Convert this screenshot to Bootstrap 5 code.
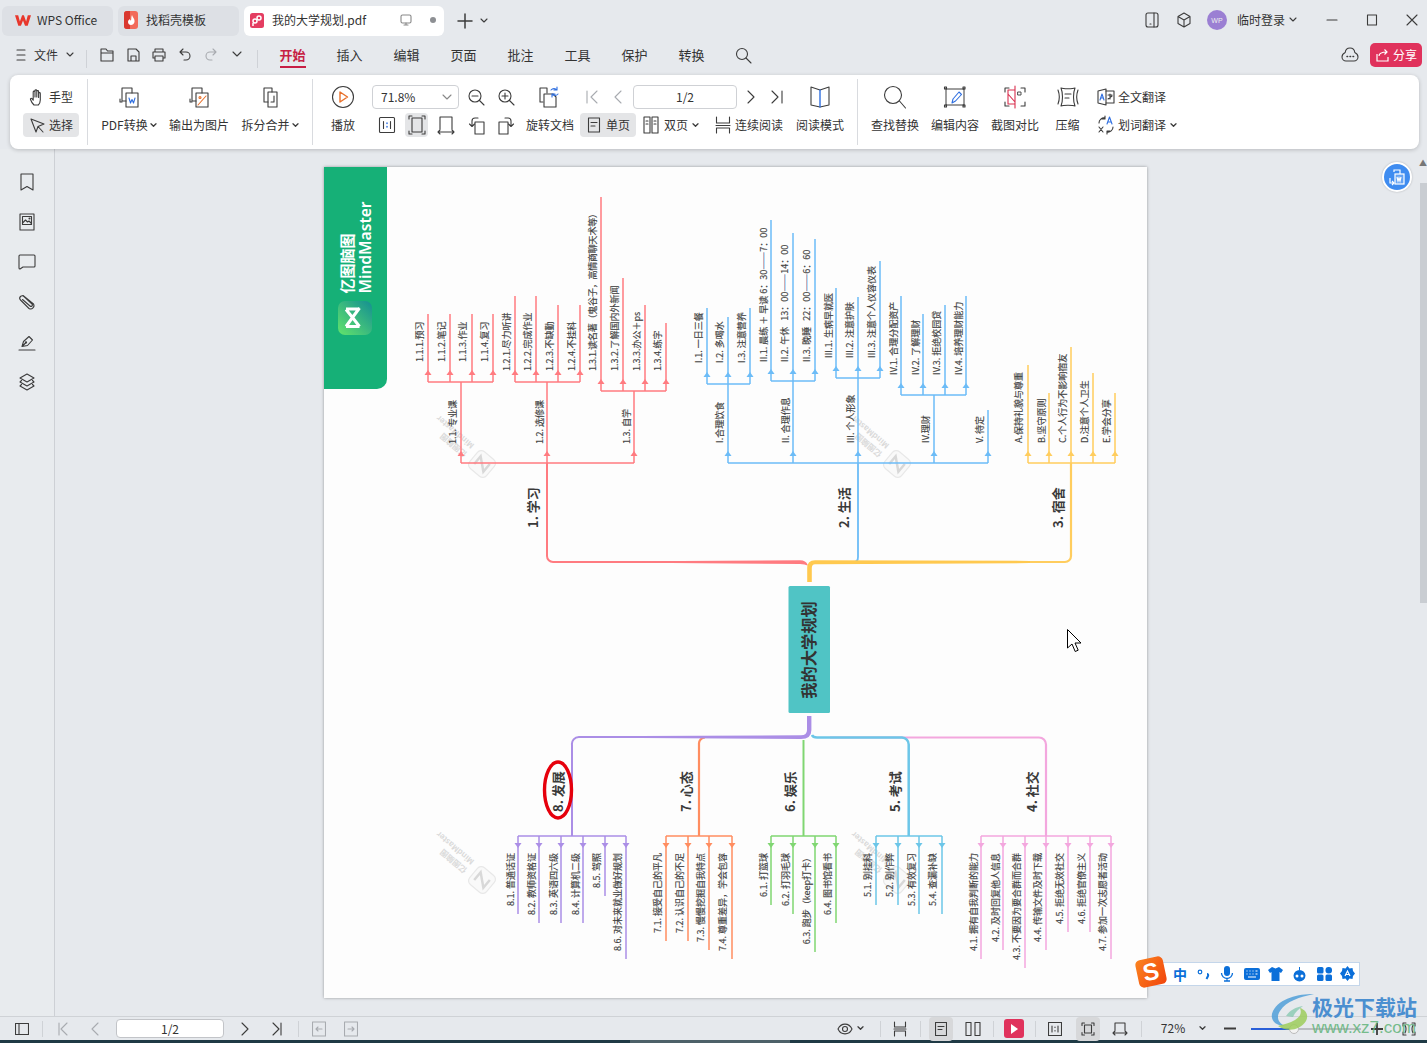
<!DOCTYPE html>
<html lang="zh">
<head>
<meta charset="utf-8">
<title>我的大学规划.pdf</title>
<link rel="stylesheet" href="https://cdn.jsdelivr.net/npm/bootstrap@5.3.0/dist/css/bootstrap.min.css">
<style>
html,body{height:1043px;overflow:hidden}
body{background:#e6e9ed;color:#333;font:12px/1.2 "Noto Sans CJK SC","Noto Sans",sans-serif;position:relative}
svg{display:block;flex:none}
.ico{fill:none;stroke:#3c3c3c;stroke-width:1.1;stroke-linecap:round;stroke-linejoin:round}
.dim{stroke:#a8abb0}
.blu{stroke:#2f6fe0}.orn{stroke:#e8702a}.rdl{stroke:#d9304f}
.cell{width:24px;height:24px;display:flex;align-items:center;justify-content:center;flex:none}
.cell-s{width:20px;height:24px;display:flex;align-items:center;justify-content:center;flex:none}
.chev{width:8px;height:24px;display:flex;align-items:center;flex:none}
.g1{margin-left:1px}.g2{margin-left:2px}.g3{margin-left:3px}.g4{margin-left:4px}.g5{margin-left:5px}.g6{margin-left:6px}.g7{margin-left:7px}.g8{margin-left:8px}.g9{margin-left:9px}.g10{margin-left:10px}.g11{margin-left:11px}.g12{margin-left:12px}.g13{margin-left:13px}.g15{margin-left:15px}.g16{margin-left:16px}.g19{margin-left:19px}.g25{margin-left:25px}
/* title row */
.titlerow{height:42px;padding:6px 0 0 2px;gap:5px}
.wtab{height:30px;background:#dde0e5;border-radius:6px;display:flex;align-items:center;flex:none;padding-bottom:2px}
.wtab-a{width:111px;padding-left:13px;gap:6px}
.wtab-b{width:121px;padding-left:6px;gap:8px}
.wtab-c{width:200px;padding-left:6px;gap:8px;background:#fff}
.tabtools{height:30px}
.rightbox{height:28px}
.avatar{width:20px;height:20px;border-radius:50%;background:#9b7fd3;color:#eee;font:7px "Liberation Sans",sans-serif}
.winbtn{width:40px;display:flex;justify-content:center}
.winlast{margin-right:-5px}
/* menu row */
.menurow{height:33px;padding:1px 5px 0 13px}
.menurow>div,.menurow>span{height:24px}
.m6{margin-top:6px}.m3{margin-top:3px}
.lh24{line-height:24px}
.vline{width:1px;background:#cfd2d7;flex:none}
.vh18{height:18px!important;align-self:center}
.mtab{width:57px;height:25px!important;text-align:center;font-size:13px;line-height:24px;flex:none}
.mtab span{display:inline-block;height:25px;border-bottom:2px solid transparent}
.mtab-on{color:#c71f45;font-weight:700}
.mtab-on span{border-bottom-color:#c71f45}
.sharebtn{width:52px;background:#e0325c;color:#fff;border-radius:5px;padding-left:6px;gap:3px;font-size:12px}
/* ribbon */
.ribbon{height:74px;margin:0 8px 0 10px;background:#fff;border-radius:8px;box-shadow:0 1px 4px rgba(0,0,0,.2);padding-top:10px;position:relative;z-index:2}
.rdiv{width:1px;height:66px;background:#d9dbdf;margin-top:-6px;flex:none}
.rowgap{gap:4px}
.rrow{height:24px;display:flex;align-items:center}
.toolcol{width:63px;flex:none}
.toolpill{width:56px;height:24px;border-radius:4px;padding-left:6px;gap:4px}
.on{background:#e4e5e7}
.bigbtn{display:flex;flex-direction:column;align-items:center;flex:none;gap:4px}
.bigbtn .cell{height:24px}
.bigbtn .lbl{height:24px;line-height:24px;white-space:nowrap;display:flex;align-items:center;gap:2px}
.midblock{margin-left:-1px;width:418px}
.zoombox{width:87px;height:24px;border:1px solid #cfd1d5;border-radius:4px;padding:0 6px 0 8px;justify-content:space-between}
.pagebox{width:104px;height:24px;border:1px solid #cfd1d5;border-radius:4px;text-align:center;line-height:22px}
.rbtn{width:23px;height:24px;border-radius:4px;flex:none}
.sglbtn{width:56px;height:24px;border-radius:4px;padding-left:2px;flex:none}
.w24{width:24px}.w48{width:48px}
.wb68{width:68px}.wb72{width:72px}.wb70{width:70px}.wb60{width:60px}.wb45{width:45px}
/* work area */
.workarea{height:867px;position:relative}
.leftrail{width:55px;border-right:1px solid #cdd0d5;background:#e8ebee;padding-top:23px;gap:20px;flex:none;align-items:center}
.sheet{width:823px;height:831px;margin:18px 0 0 269px;background:#fdfdfd;box-shadow:0 0 3px rgba(0,0,0,.35);flex:none}
.sheet text{font-family:"Noto Sans CJK SC","Liberation Sans",sans-serif;font-size:9px;fill:#3f3f3f}
.sheet .big{font-size:13px;font-weight:700;fill:#3a3a3a}
.sheet .ctr{font-size:16.3px;font-weight:700;fill:#333;text-anchor:middle}
.sheet .brand1{font-size:15px;font-weight:700;fill:#fff}
.sheet .brand2{font-size:15.6px;font-family:"Noto Sans",sans-serif;font-weight:600;fill:#fff}
.sheet .wm1{font-size:8px;fill:#dadada;font-weight:700}
.up,.dn{text-anchor:start;stroke:#444;stroke-width:.16}
.dn{text-anchor:end}
.sublines{fill:none;stroke-width:1.5}
/* overlays */
.floatbtn{position:absolute;left:1382px;top:13px;width:30px;height:30px;border-radius:50%;background:#3f8cf0;border:2px solid #fff;box-shadow:0 0 2px rgba(0,0,0,.25)}
.scrolltrack{position:absolute;left:1420px;top:34px;width:7px;height:420px;background:#c9cdd2}
.scrollup{position:absolute;left:1419px;top:9px;font-size:8px;color:#777}
.mouseptr{position:absolute;left:1067px;top:480px}
/* status */
.statusbar{height:24px;background:#e6e9ed;border-top:1px solid #cfd2d6;padding-left:12px;padding-right:8px;position:relative}
.sdiv{width:1px;height:16px;background:#cfd2d6;flex:none}
.sinput{width:108px;height:19px;background:#fff;border:1px solid #c2c4c8;border-radius:4px;text-align:center;line-height:17px;flex:none}
.sbtn{width:24px;height:24px;border-radius:4px;flex:none;background:#d7d8da}
.redplay{width:20px;height:19px;border-radius:3px;background:#e0325c;flex:none}
.pct{width:30px;text-align:center;flex:none;font-size:12px}
.slide{width:110px;height:2px;background:#b9bcc1;flex:none}
.slide i{display:block;width:39px;height:2px;background:#2a5fd8}
.slide b{display:block;width:10px;height:10px;border-radius:50%;background:#f3f3f3;border:1px solid #bbb;margin-left:-1px}
.taskstrip{height:3px;background:linear-gradient(90deg,#1f3a45 630px,#4d6168 630px,#4d6168 790px,#1f3a45 790px)}
/* IME */
.imebar{position:absolute;left:1147px;top:962px;width:213px;height:24px;background:#fff;border:1px solid #c4d6ea;color:#0b6fd9;padding-left:24px;z-index:5}
.imebar .hz{font-weight:700;font-size:14px;line-height:22px;width:14px}
.imelogo{position:absolute;left:1137px;top:958px;width:28px;height:28px;background:linear-gradient(135deg,#fb8420,#f1450c);border-radius:5px;transform:rotate(-12deg);color:#fff;font:900 24px/27px "Liberation Sans",sans-serif;text-align:center;z-index:6}
.fillb{fill:#0b6fd9;stroke:none}
/* watermark */
.wmk{position:absolute;left:1268px;top:992px;width:155px;height:46px;z-index:7;pointer-events:none}
.wmk-t{position:absolute;left:44px;top:3px;font-size:21px;line-height:23px;font-weight:700;color:#4b8fd0;white-space:nowrap}
.wmk-u{position:absolute;left:44px;top:27px;font:17px/18px "Liberation Sans",sans-serif;color:#62b47a;white-space:nowrap;opacity:.85}
</style>
</head>
<body>

<div class="titlerow d-flex align-items-start">
  <div class="wtab wtab-a">
    <svg width="16" height="13" viewBox="0 0 18 14"><path d="M0 1h3.6l1.900 7L8 1h2l2.500 7 1.900-7H18l-3.700 12h-3L9 7l-2.300 6h-3z" fill="#e8372c"/></svg>
    <span>WPS Office</span>
  </div>
  <div class="wtab wtab-b">
    <svg width="14" height="18" viewBox="0 0 14 18"><rect width="14" height="18" rx="3" fill="#f26a5a"/><path d="M0 3a3 3 0 0 1 3-3h3v18H3a3 3 0 0 1-3-3z" fill="#d9382f"/><path d="M8 4c1 3 3 4 2.500 7-.4 2-2 3-3.500 3S4 13 4 11c0-1.500 1-2 1.500-3 .5 1 1 1.500 1.500 1.500C7.500 8 7 6 8 4z" fill="#fff"/></svg>
    <span>找稻壳模板</span>
  </div>
  <div class="wtab wtab-c">
    <svg width="14" height="15" viewBox="0 0 14 15"><rect width="14" height="15" rx="2.500" fill="#e43d61"/><circle cx="5" cy="8" r="2" fill="none" stroke="#fff" stroke-width="1.500"/><circle cx="9" cy="5" r="2" fill="none" stroke="#fff" stroke-width="1.500"/><path d="M3 10v3" stroke="#fff" stroke-width="1.500"/></svg>
    <span>我的大学规划.pdf</span>
    <svg class="ico g25" width="14" height="14" viewBox="0 0 14 14"><rect x="2" y="2" width="10" height="8" rx="1.500" stroke="#888"/><path d="M7 10v2M5 12h4" stroke="#888"/></svg>
    <svg class="g8" width="8" height="8" viewBox="0 0 8 8"><circle cx="4" cy="4" r="3" fill="#8d8f93"/></svg>
  </div>
  <div class="tabtools d-flex align-items-center g8">
    <svg class="ico" width="16" height="16" viewBox="0 0 16 16"><path d="M8 1v14M1 8h14" stroke-width="1.500"/></svg>
    <svg class="ico g7" width="8" height="6" viewBox="0 0 8 6"><path d="M1 1l3 3 3-3"/></svg>
  </div>
  <div class="rightbox ms-auto d-flex align-items-center">
    <svg class="ico" width="16" height="18" viewBox="0 0 16 18"><rect x="2" y="2" width="12" height="14" rx="2"/><path d="M10 2v14M6 13h1"/></svg>
    <svg class="ico g16" width="16" height="18" viewBox="0 0 16 18"><path d="M8 2l6 3.500v7L8 16l-6-3.500v-7zM2 5.500L8 9l6-3.500M8 9v7"/></svg>
    <div class="avatar g15 d-flex align-items-center justify-content-center">WP</div>
    <span class="g10">临时登录</span>
    <svg class="ico g4" width="8" height="6" viewBox="0 0 8 6"><path d="M1 1l3 3 3-3"/></svg>
    <div class="winbtn g15"><svg class="ico" width="12" height="12" viewBox="0 0 12 12"><path d="M1 6h10"/></svg></div>
    <div class="winbtn"><svg class="ico" width="12" height="12" viewBox="0 0 12 12"><rect x="1.500" y="1" width="9" height="10"/></svg></div>
    <div class="winbtn winlast"><svg class="ico" width="12" height="12" viewBox="0 0 12 12"><path d="M1 1l10 10M11 1L1 11"/></svg></div>
  </div>
</div>

<div class="menurow d-flex align-items-start">
  <svg class="ico m6" width="16" height="12" viewBox="0 0 16 12"><path d="M4 1h8M4 6h8M4 11h8"/></svg>
  <span class="g5 lh24">文件</span>
  <div class="chev g8"><svg class="ico" width="8" height="6" viewBox="0 0 8 6"><path d="M1 1l3 3 3-3"/></svg></div>
  <div class="vline vh18 g12"></div>
  <div class="cell-s g10"><svg class="ico" width="16" height="16" viewBox="0 0 16 16"><path d="M2 2h5l1.500 2H14v10H2zM2 6h12"/></svg></div>
  <div class="cell-s g6"><svg class="ico" width="16" height="16" viewBox="0 0 16 16"><path d="M3 2h8l3 3v9H3zM6 14V9h5v5"/></svg></div>
  <div class="cell-s g6"><svg class="ico" width="16" height="16" viewBox="0 0 16 16"><path d="M4 5V2h8v3M4 11H2V5h12v6h-2M4 9h8v5H4z"/></svg></div>
  <div class="cell-s g6"><svg class="ico" width="16" height="16" viewBox="0 0 16 16"><path d="M6 2L3 5l3 3M3 5h6a4 4 0 0 1 0 8H7"/></svg></div>
  <div class="cell-s g6"><svg class="ico dim" width="16" height="16" viewBox="0 0 16 16"><path d="M10 2l3 3-3 3M13 5H7a4 4 0 0 0 0 8h2"/></svg></div>
  <div class="cell-s g6"><svg class="ico" width="10" height="8" viewBox="0 0 10 8"><path d="M1 1l4 4 4-4"/></svg></div>
  <div class="vline vh18 g10"></div>
  <div class="mtab g6 mtab-on"><span>开始</span></div>
  <div class="mtab"><span>插入</span></div>
  <div class="mtab"><span>编辑</span></div>
  <div class="mtab"><span>页面</span></div>
  <div class="mtab"><span>批注</span></div>
  <div class="mtab"><span>工具</span></div>
  <div class="mtab"><span>保护</span></div>
  <div class="mtab"><span>转换</span></div>
  <div class="cell-s g13"><svg class="ico" width="17" height="17" viewBox="0 0 17 17"><circle cx="7" cy="7" r="5.500"/><path d="M11 11l5 5"/></svg></div>
  <svg class="ico ms-auto m3" width="18" height="18" viewBox="0 0 18 18"><path d="M9 2c3 0 4.500 2 4.800 4.500C16 7.500 17 9 17 11c0 2.500-2 4-4 4H5c-2 0-4-1.500-4-4 0-2 1-3.500 3.200-4.500C4.500 4 6 2 9 2z"/><path d="M6 10.500h.6M9 10.500h.6M12 10.500h.6" stroke-width="1.500"/></svg>
  <div class="sharebtn g11 d-flex align-items-center">
    <svg width="14" height="14" viewBox="0 0 14 14" fill="none" stroke="#fff" stroke-width="1.200"><path d="M1 6v7h11V9M3 8c0-3 3-4 8-4M8.500 1.500L11 4 8.500 6.500"/></svg>
    <span>分享</span>
  </div>
</div>

<div class="ribbon d-flex">
  <!-- hand / select -->
  <div class="toolcol d-flex flex-column rowgap g13">
    <div class="toolpill d-flex align-items-center">
      <svg class="ico" width="16" height="18" viewBox="0 0 16 18"><path d="M5 17c-1.500-1.500-3-4-3.500-5.500-.4-1 .8-1.600 1.500-.8l1.200 1.500V4c0-1.200 1.800-1.200 1.800 0v5V2.800c0-1.200 1.800-1.200 1.800 0V9V3.500c0-1.200 1.800-1.200 1.800 0v6V5.500c0-1.200 1.700-1.200 1.700 0V12c0 2.500-1 4-2 5z"/></svg><span>手型</span>
    </div>
    <div class="toolpill on d-flex align-items-center">
      <svg class="ico" width="16" height="18" viewBox="0 0 16 18"><path d="M2 3l5 13 2-5.500L15 8zM9 10.500L14 16"/></svg><span>选择</span>
    </div>
  </div>
  <div class="rdiv g1"></div>
  <!-- convert -->
  <div class="d-flex g7">
    <div class="bigbtn wb68"><div class="cell"><svg class="ico" width="24" height="24" viewBox="0 0 24 24"><path d="M15 8V3H5v13h4M3 14v3h2"/><rect x="9" y="8" width="12" height="14"/><path class="blu" d="M12 13l1.500 5 1.500-3.500 1.500 3.500 1.500-5"/></svg></div><div class="lbl">PDF转换<svg class="ico" width="7" height="5" viewBox="0 0 8 6"><path d="M1 1l3 3 3-3" stroke-width="1.600"/></svg></div></div>
    <div class="bigbtn wb72"><div class="cell"><svg class="ico" width="24" height="24" viewBox="0 0 24 24"><path d="M15 8V3H5v13h4M3 14v3h2"/><rect x="9" y="8" width="12" height="14"/><path class="orn" d="M11 20l8-9"/><circle class="orn" cx="13" cy="12.500" r="1"/></svg></div><div class="lbl">输出为图片</div></div>
    <div class="bigbtn wb70"><div class="cell"><svg class="ico" width="24" height="24" viewBox="0 0 24 24"><path d="M14 7V3H6v14h4"/><path d="M10 7h9v15h-9z"/><path d="M16 11v6h-3"/></svg></div><div class="lbl">拆分合并<svg class="ico" width="7" height="5" viewBox="0 0 8 6"><path d="M1 1l3 3 3-3" stroke-width="1.600"/></svg></div></div>
  </div>
  <div class="rdiv g7"></div>
  <div class="bigbtn wb60"><div class="cell"><svg class="ico" width="24" height="24" viewBox="0 0 24 24"><circle cx="12" cy="12" r="10.500"/><path class="orn" d="M9 7l7.500 5L9 17z" stroke-width="1.400"/></svg></div><div class="lbl">播放</div></div>
  <!-- middle -->
  <div class="midblock d-flex flex-column rowgap">
    <div class="rrow">
      <div class="zoombox d-flex align-items-center"><span>71.8%</span><svg class="ico" width="10" height="6" viewBox="0 0 10 6"><path d="M1 1l4 4 4-4" stroke="#888"/></svg></div>
      <div class="cell g5"><svg class="ico" width="18" height="18" viewBox="0 0 18 18"><circle cx="8" cy="8" r="6"/><path d="M12.500 12.500L17 17M5 8h6"/></svg></div>
      <div class="cell g6"><svg class="ico" width="18" height="18" viewBox="0 0 18 18"><circle cx="8" cy="8" r="6"/><path d="M12.500 12.500L17 17M5 8h6M8 5v6"/></svg></div>
      <div class="cell g19"><svg class="ico" width="22" height="24" viewBox="0 0 22 24"><path d="M9 8V3H2v14h3"/><path d="M6 9h9l3 3v10H6z"/><path class="blu" d="M13 5a4 4 0 0 1 6 0M19 2v3h-3M20 9a4 4 0 0 1-6 0M14 12V9h3"/></svg></div>
      <div class="cell g19"><svg class="ico dim" width="14" height="16" viewBox="0 0 14 16"><path d="M2 2v12M12 2L6 8l6 6"/></svg></div>
      <div class="cell g2"><svg class="ico dim" width="10" height="16" viewBox="0 0 10 16"><path d="M8 2L2 8l6 6"/></svg></div>
      <div class="pagebox g3">1/2</div>
      <div class="cell g2"><svg class="ico" width="10" height="16" viewBox="0 0 10 16"><path d="M2 2l6 6-6 6"/></svg></div>
      <div class="cell g2"><svg class="ico" width="14" height="16" viewBox="0 0 14 16"><path d="M2 2l6 6-6 6M12 2v12"/></svg></div>
    </div>
    <div class="rrow">
      <div class="cell g3"><svg class="ico" width="18" height="18" viewBox="0 0 18 18"><rect x="1.500" y="1.500" width="15" height="15" rx="1"/><path d="M5.500 5.500v7M12.500 5.500v7"/><path class="blu" d="M9 7v.5M9 10.500v.5" stroke-width="1.500"/></svg></div>
      <div class="rbtn on g6 d-flex align-items-center justify-content-center"><svg class="ico" width="18" height="20" viewBox="0 0 18 20"><path d="M1 4V1h3M14 1h3v3M17 16v3h-3M4 19H1v-3"/><rect x="4" y="3" width="10" height="14"/></svg></div>
      <div class="cell g6"><svg class="ico" width="18" height="20" viewBox="0 0 18 20"><path d="M3 14V2h12v12M1 17h16M3 15l-2 2 2 2M15 15l2 2-2 2"/></svg></div>
      <div class="cell g7"><svg class="ico" width="18" height="20" viewBox="0 0 18 20"><rect x="7" y="7" width="9" height="12"/><path d="M4 11V6a3 3 0 0 1 3-3h3M1.500 9L4 11.500 6.500 9"/></svg></div>
      <div class="cell g5"><svg class="ico" width="18" height="20" viewBox="0 0 18 20"><rect x="2" y="7" width="9" height="12"/><path d="M14 11V6a3 3 0 0 0-3-3H8M11.500 9l2.500 2.500L16.500 9"/></svg></div>
      <span class="w48 g8 flex-none">旋转文档</span>
      <div class="sglbtn on g6 d-flex align-items-center"><div class="cell"><svg class="ico" width="14" height="16" viewBox="0 0 14 16"><rect x="1.500" y="1" width="11" height="14"/><path d="M4 5.500h6M4 9h4"/></svg></div><span>单页</span></div>
      <div class="cell g3"><svg class="ico" width="16" height="18" viewBox="0 0 16 18"><rect x="1" y="1" width="6" height="16"/><rect x="9" y="1" width="6" height="16"/><path d="M3 5h2M3 8h2M11 5h2M11 8h2"/></svg></div>
      <span class="g1 w24 flex-none">双页</span>
      <div class="chev g4"><svg class="ico" width="7" height="5" viewBox="0 0 8 6"><path d="M1 1l3 3 3-3" stroke-width="1.600"/></svg></div>
      <div class="cell g11"><svg class="ico" width="16" height="18" viewBox="0 0 16 18"><path d="M1.500 1v6h13V1M1 9.500h14M1.500 17v-5h13v5"/></svg></div>
      <span class="w48 flex-none">连续阅读</span>
    </div>
  </div>
  <div class="bigbtn wb60"><div class="cell"><svg class="ico" width="22" height="24" viewBox="0 0 22 24"><path d="M2 2l9 3 9-3v18l-9 2-9-2z"/><path class="blu" d="M11 5v17" stroke-width="1.400"/></svg></div><div class="lbl">阅读模式</div></div>
  <div class="rdiv g7"></div>
  <div class="bigbtn wb60 g7"><div class="cell"><svg class="ico" width="24" height="24" viewBox="0 0 24 24"><circle cx="10" cy="10" r="8.500"/><path d="M16.500 16l6 7"/></svg></div><div class="lbl">查找替换</div></div>
  <div class="bigbtn wb60"><div class="cell"><svg class="ico" width="24" height="24" viewBox="0 0 24 24"><path d="M3 5v15h18V4H3M3 3v1M21 3v1M3 20v1M21 20v1" stroke-width="1"/><rect x="1.500" y="2" width="2" height="2"/><rect x="20" y="2" width="2" height="2"/><rect x="1.500" y="20" width="2" height="2"/><rect x="20" y="20" width="2" height="2"/><path class="blu" d="M9 18l1-4 6-7 2.500 2.500-6 6.500z"/></svg></div><div class="lbl">编辑内容</div></div>
  <div class="bigbtn wb60"><div class="cell"><svg class="ico" width="24" height="24" viewBox="0 0 24 24"><path d="M2 7V3h4M18 3h4v4M22 17v4h-4M6 21H2v-4"/><path class="rdl" d="M12 1v22M5 5h7v14H5zM5 9l7 8"/><rect x="15" y="7" width="3" height="3" stroke-width=".9"/></svg></div><div class="lbl">截图对比</div></div>
  <div class="bigbtn wb45"><div class="cell"><svg class="ico" width="24" height="24" viewBox="0 0 24 24"><path d="M5 3c2 1 12 1 14 0-2 5-2 13 0 18-2-1-12-1-14 0 2-5 2-13 0-18z"/><path d="M2 5c1.500 4 1.500 10 0 14M22 5c-1.500 4-1.500 10 0 14M9 9h6M9 13h4"/></svg></div><div class="lbl">压缩</div></div>
  <div class="d-flex flex-column rowgap g4">
    <div class="rrow"><div class="cell"><svg class="ico" width="18" height="18" viewBox="0 0 18 18"><path d="M1 3l8-2v16l-8-2z"/><path d="M9 3h8v12H9"/><path class="blu" d="M3 12l2-6 2 6M3.800 10h2.400"/><path d="M11 7h4M13 6v5M11 11l4-3"/></svg></div><span>全文翻译</span></div>
    <div class="rrow"><div class="cell"><svg class="ico" width="18" height="20" viewBox="0 0 18 20"><path d="M2 8a5 5 0 0 1 6-5M8 1v3H5M16 12a5 5 0 0 1-6 5M10 19v-3h3"/><path class="blu" d="M10 9l2.500-7L15 9M11 7h3"/><path d="M2 12l4 5M6 12l-4 5"/></svg></div><span>划词翻译</span><div class="chev g4"><svg class="ico" width="7" height="5" viewBox="0 0 8 6"><path d="M1 1l3 3 3-3" stroke-width="1.600"/></svg></div></div>
  </div>
</div>

<div class="workarea d-flex">
  <div class="leftrail d-flex flex-column">
    <svg class="ico" width="20" height="20" viewBox="0 0 20 20"><path d="M4 2h12v16l-6-3.500L4 18z"/></svg>
    <svg class="ico" width="20" height="20" viewBox="0 0 20 20"><rect x="3" y="2" width="14" height="16"/><rect x="5.500" y="4.500" width="9" height="8"/><path d="M5.500 11l3-3 2 2 1.500-1 2.500 2.500"/><circle cx="12.500" cy="6.500" r=".5"/></svg>
    <svg class="ico" width="20" height="20" viewBox="0 0 20 20"><path d="M3 3h14a1 1 0 0 1 1 1v10a1 1 0 0 1-1 1H6l-3 2a1 1 0 0 1-1-1V4a1 1 0 0 1 1-1z"/></svg>
    <svg class="ico" width="20" height="20" viewBox="0 0 20 20"><path d="M6 3.500l10.500 8.500a3.300 3.300 0 0 1-4.500 4.500L3.500 8a2.400 2.400 0 0 1 3.500-3.500l8 7.500a1.400 1.400 0 0 1-2 2L5.500 7.500"/></svg>
    <svg class="ico" width="20" height="20" viewBox="0 0 20 20"><path d="M2 18h16M5 14.500l1.500-5L12 4.500l3.500 3.500-5 5.500zM5 14.500l3.500-3.500"/><circle cx="9" cy="10.500" r=".6"/></svg>
    <svg class="ico" width="20" height="20" viewBox="0 0 20 20"><path d="M10 2l7 4-7 4-7-4zM4.500 8.500L3 10l7 4 7-4-1.500-1.500M4.500 12.500L3 14l7 4 7-4-1.500-1.500"/></svg>
  </div>

  <div class="sheet">
    <svg width="823" height="831" viewBox="324 167 823 831">
      <defs>
        <path id="au" d="M-3.500 0L0-5 3.500 0z"/>
        <path id="ad" d="M-3.500 0L0 5 3.500 0z"/>
        <g id="wm">
          <rect x="-11" y="-11" width="22" height="22" rx="5" fill="#f9f9f9" stroke="#e8e8e8" stroke-width="1.200"/>
          <path d="M-6 5V-5L6 5V-5" fill="none" stroke="#d8d8d8" stroke-width="2.500"/>
          <text class="wm1" x="18" y="-1">亿图脑图</text>
          <text class="wm1" x="18" y="10">MindMaster</text>
        </g>
        <linearGradient id="lg" x1="0" y1="1" x2="1" y2="0"><stop offset="0" stop-color="#62e46b"/><stop offset="1" stop-color="#148f92"/></linearGradient>
      </defs>

      <!-- banner -->
      <path d="M324 167h63v212a10 10 0 0 1-10 10h-53z" fill="#16b077"/>
      <rect x="338" y="301" width="34" height="34" rx="7" fill="url(#lg)"/>
      <path d="M346 309.500l6.500 8-6.500 9M359.500 308l-7 9.500 7 9M346 309h13.500M346 326.500h13.500" fill="none" stroke="#fff" stroke-width="3" stroke-linejoin="round"/>
      <text class="brand1" transform="translate(352.500 293.500) rotate(-90)">亿图脑图</text>
      <text class="brand2" transform="translate(370.500 293.500) rotate(-90)">MindMaster</text>

      <!-- watermarks -->
      <use href="#wm" transform="translate(482 464) rotate(220)"/>
      <use href="#wm" transform="translate(897 464) rotate(220)"/>
      <use href="#wm" transform="translate(482 880) rotate(220)"/>
      <use href="#wm" transform="translate(897 880) rotate(220)"/>

      <!-- trunk -->
      <path d="M547 463V556a6 6 0 0 0 6 6H700" fill="none" stroke="#ff7b80" stroke-width="2"/>
      <path d="M640 561.200L800 560.200Q806 560.400 807.500 564.500L807.500 565.500Q805 564 800 564L640 562.800z" fill="#ff7b80"/>
      <path d="M858 463V557q0 5-4 5" fill="none" stroke="#6cbcf7" stroke-width="1.800"/>
      <path d="M1071 463V556a6 6 0 0 1-6 6H1000" fill="none" stroke="#ffcd5e" stroke-width="2.200"/>
      <path d="M807.200 582V568Q807.200 560.300 815 560.300L1030 560.900V563.100L815 564.200Q811.800 564.200 811.800 568V582z" fill="#ffc94f"/>
      <path d="M572 836V745a7 7 0 0 1 7-8H700" fill="none" stroke="#ab8ee6" stroke-width="2"/>
      <path d="M699 836V744a6 6 0 0 1 6-6.500" fill="none" stroke="#ff8d60" stroke-width="2.200"/>
      <path d="M803.500 836V740" fill="none" stroke="#80d672" stroke-width="2"/>
      <path d="M830 737.500H1039a7 7 0 0 1 7 7V836" fill="none" stroke="#f3a7de" stroke-width="2.200"/>
      <path d="M812 735q1 2.500 5 2.500H902a7 7 0 0 1 6.700 7V836" fill="none" stroke="#6cc6e8" stroke-width="2.500"/>
      <path d="M807 716V730Q807 735.300 801 735.300L640 736V738L801 739Q811.400 739 811.400 730V716z" fill="#ab8ee6"/>

      <!-- study (red) -->
      <g class="sublines" stroke="#ff7b80">
        <path d="M428 314V382M450 314V382M472 314V382M493 314V382M515 296V382M536 296V382M558 305V382M580 305V382M601 197V391M623 278V391M645 305V391M666 323V391M428 382H493M515 382H580M601 391H666M461 382V463M547 382V463M634 391V463M461 463H634"/>
      </g>
      <g fill="#ff7b80">
        <use href="#au" x="428" y="375"/><use href="#au" x="450" y="375"/><use href="#au" x="472" y="375"/><use href="#au" x="493" y="375"/>
        <use href="#au" x="515" y="375"/><use href="#au" x="536" y="375"/><use href="#au" x="558" y="375"/><use href="#au" x="580" y="375"/>
        <use href="#au" x="601" y="384"/><use href="#au" x="623" y="384"/><use href="#au" x="645" y="384"/><use href="#au" x="666" y="384"/>
        <use href="#au" x="461" y="456"/><use href="#au" x="547" y="456"/><use href="#au" x="634" y="456"/>
      </g>
      <!-- life (blue) -->
      <g class="sublines" stroke="#6cbcf7">
        <path d="M707 308V384M728 317V384M750 308V384M707 384H750M771 220V381M793 233V381M815 239V381M771 381H815M836 288V378M858 297V378M880 261V378M836 378H880M901 296V395M923 314V395M945 305V395M966 296V395M901 395H966M728 384V463M793 381V463M858 378V463M934 395V463M988 410V463M728 463H988"/>
      </g>
      <g fill="#6cbcf7">
        <use href="#au" x="707" y="377"/><use href="#au" x="728" y="377"/><use href="#au" x="750" y="377"/>
        <use href="#au" x="771" y="374"/><use href="#au" x="793" y="374"/><use href="#au" x="815" y="374"/>
        <use href="#au" x="836" y="371"/><use href="#au" x="858" y="371"/><use href="#au" x="880" y="371"/>
        <use href="#au" x="901" y="388"/><use href="#au" x="923" y="388"/><use href="#au" x="945" y="388"/><use href="#au" x="966" y="388"/>
        <use href="#au" x="728" y="456"/><use href="#au" x="793" y="456"/><use href="#au" x="858" y="456"/><use href="#au" x="934" y="456"/><use href="#au" x="988" y="456"/>
      </g>
      <!-- dorm (yellow) -->
      <g class="sublines" stroke="#ffcd5e">
        <path d="M1028 365V463M1049 393V463M1071 347V463M1093 373V463M1115 393V463M1028 463H1115"/>
      </g>
      <g fill="#ffcd5e">
        <use href="#au" x="1028" y="456"/><use href="#au" x="1049" y="456"/><use href="#au" x="1071" y="456"/><use href="#au" x="1093" y="456"/><use href="#au" x="1115" y="456"/>
      </g>
      <!-- purple -->
      <g class="sublines" stroke="#ab8ee6"><path d="M518 836H626M518 836V914M539 836V923M561 836V923M583 836V923M605 836V896M626 836V959"/></g>
      <g fill="#ab8ee6"><use href="#ad" x="518" y="843"/><use href="#ad" x="539" y="843"/><use href="#ad" x="561" y="843"/><use href="#ad" x="583" y="843"/><use href="#ad" x="605" y="843"/><use href="#ad" x="626" y="843"/></g>
      <!-- orange -->
      <g class="sublines" stroke="#ff8d60"><path d="M666 836H732M666 836V941M688 836V941M709 836V950M732 836V959"/></g>
      <g fill="#ff8d60"><use href="#ad" x="666" y="843"/><use href="#ad" x="688" y="843"/><use href="#ad" x="709" y="843"/><use href="#ad" x="732" y="843"/></g>
      <!-- green -->
      <g class="sublines" stroke="#80d672"><path d="M771 836H836M771 836V905M793 836V914M815 836V952M836 836V923"/></g>
      <g fill="#80d672"><use href="#ad" x="771" y="843"/><use href="#ad" x="793" y="843"/><use href="#ad" x="815" y="843"/><use href="#ad" x="836" y="843"/></g>
      <!-- cyan -->
      <g class="sublines" stroke="#6cc6e8"><path d="M876 836H942M876 836V905M898 836V905M919 836V914M942 836V914"/></g>
      <g fill="#6cc6e8"><use href="#ad" x="876" y="843"/><use href="#ad" x="898" y="843"/><use href="#ad" x="919" y="843"/><use href="#ad" x="942" y="843"/></g>
      <!-- pink -->
      <g class="sublines" stroke="#f3a7de"><path d="M981 836H1111M981 836V959M1003 836V950M1025 836V968M1046 836V950M1068 836V932M1090 836V932M1111 836V959"/></g>
      <g fill="#f3a7de"><use href="#ad" x="981" y="843"/><use href="#ad" x="1003" y="843"/><use href="#ad" x="1025" y="843"/><use href="#ad" x="1046" y="843"/><use href="#ad" x="1068" y="843"/><use href="#ad" x="1090" y="843"/><use href="#ad" x="1111" y="843"/></g>

      <!-- central node -->
      <rect x="788.500" y="586" width="41.500" height="127" rx="1.500" fill="#50c4c5"/>
      <text class="ctr" transform="translate(815 650) rotate(-90)">我的大学规划</text>

      <!-- main labels -->
      <text class="big" transform="translate(538 528) rotate(-90)">1. 学习</text>
      <text class="big" transform="translate(849 528) rotate(-90)">2. 生活</text>
      <text class="big" transform="translate(1063 528) rotate(-90)">3. 宿舍</text>
      <text class="big" transform="translate(563 812) rotate(-90)">8. 发展</text>
      <text class="big" transform="translate(691 812) rotate(-90)">7. 心态</text>
      <text class="big" transform="translate(795 812) rotate(-90)">6. 娱乐</text>
      <text class="big" transform="translate(900 812) rotate(-90)">5. 考试</text>
      <text class="big" transform="translate(1037 812) rotate(-90)">4. 社交</text>
      <ellipse cx="558" cy="790" rx="13.500" ry="28" fill="none" stroke="#e6000c" stroke-width="3.400"/>

      <!-- top leaves -->
      <g class="up">
        <text transform="translate(423 362) rotate(-90)">1.1.1.预习</text>
        <text transform="translate(445 362) rotate(-90)">1.1.2.笔记</text>
        <text transform="translate(466 362) rotate(-90)">1.1.3.作业</text>
        <text transform="translate(488 362) rotate(-90)">1.1.4.复习</text>
        <text transform="translate(510 371) rotate(-90)">1.2.1.尽力听讲</text>
        <text transform="translate(531 371) rotate(-90)">1.2.2.完成作业</text>
        <text transform="translate(553 371) rotate(-90)">1.2.3.不缺勤</text>
        <text transform="translate(575 371) rotate(-90)">1.2.4.不挂科</text>
        <text transform="translate(595.500 371) rotate(-90)" textLength="162">1.3.1.读名著（鬼谷子，高情商聊天术等）</text>
        <text transform="translate(618 371) rotate(-90)">1.3.2.了解国内外新闻</text>
        <text transform="translate(639.500 371) rotate(-90)">1.3.3.办公＋ps</text>
        <text transform="translate(661 371) rotate(-90)">1.3.4.练字</text>
        <text transform="translate(455.500 444) rotate(-90)">1.1. 专业课</text>
        <text transform="translate(542.500 444) rotate(-90)">1.2. 选修课</text>
        <text transform="translate(629.500 444) rotate(-90)">1.3. 自学</text>

        <text transform="translate(701.500 363) rotate(-90)">I.1. 一日三餐</text>
        <text transform="translate(722.500 363) rotate(-90)">I.2. 多喝水</text>
        <text transform="translate(744.500 363) rotate(-90)">I.3. 注意营养</text>
        <text transform="translate(766.500 362) rotate(-90)">II.1. 晨练 ＋ 早读&#160;6：30<tspan fill="#2447a8">——</tspan>7：00</text>
        <text transform="translate(787.500 362) rotate(-90)">II.2. 午休&#160;&#160;&#160;13：00<tspan fill="#2447a8">——</tspan>14：00</text>
        <text transform="translate(809.500 362) rotate(-90)">II.3. 晚睡&#160;&#160;&#160;22：00<tspan fill="#2447a8">——</tspan>6：60</text>
        <text transform="translate(831.500 358) rotate(-90)">III.1. 生病早就医</text>
        <text transform="translate(852.500 358) rotate(-90)">III.2. 注意护肤</text>
        <text transform="translate(874.500 358) rotate(-90)">III.3. 注意个人仪容仪表</text>
        <text transform="translate(896.500 375) rotate(-90)">IV.1. 合理分配资产</text>
        <text transform="translate(918.500 375) rotate(-90)">IV.2. 了解理财</text>
        <text transform="translate(939.500 375) rotate(-90)">IV.3. 拒绝校园贷</text>
        <text transform="translate(961.500 375) rotate(-90)">IV.4. 培养理财能力</text>
        <text transform="translate(723 443) rotate(-90)">I.合理饮食</text>
        <text transform="translate(788.500 443) rotate(-90)">II. 合理作息</text>
        <text transform="translate(853.500 443) rotate(-90)">III. 个人形象</text>
        <text transform="translate(928.500 443) rotate(-90)">IV.理财</text>
        <text transform="translate(982.500 443) rotate(-90)">V. 待定</text>

        <text transform="translate(1021.500 443) rotate(-90)">A.保持礼貌与尊重</text>
        <text transform="translate(1044.500 443) rotate(-90)">B.坚守原则</text>
        <text transform="translate(1065.500 443) rotate(-90)">C.个人行为不影响宿友</text>
        <text transform="translate(1087.500 443) rotate(-90)">D.注意个人卫生</text>
        <text transform="translate(1109.500 443) rotate(-90)">E.学会分享</text>
      </g>
      <!-- bottom leaves -->
      <g class="dn">
        <text transform="translate(513.500 853) rotate(-90)">8.1. 普通话证</text>
        <text transform="translate(534.500 853) rotate(-90)">8.2. 教师资格证</text>
        <text transform="translate(556.500 853) rotate(-90)">8.3. 英语四六级</text>
        <text transform="translate(578.500 853) rotate(-90)">8.4. 计算机二级</text>
        <text transform="translate(599.500 853) rotate(-90)">8.5. 驾照</text>
        <text transform="translate(620.500 853) rotate(-90)">8.6. 对未来就业做好规划</text>
        <text transform="translate(661 853) rotate(-90)">7.1. 接受自己的平凡</text>
        <text transform="translate(682.500 853) rotate(-90)">7.2. 认识自己的不足</text>
        <text transform="translate(704 853) rotate(-90)">7.3. 慢慢挖掘自我特点</text>
        <text transform="translate(726 853) rotate(-90)">7.4. 尊重差异，学会包容</text>
        <text transform="translate(767 853) rotate(-90)">6.1. 打篮球</text>
        <text transform="translate(788.500 853) rotate(-90)">6.2. 打羽毛球</text>
        <text transform="translate(810 853) rotate(-90)">6.3. 跑步（keep打卡）</text>
        <text transform="translate(831 853) rotate(-90)">6.4. 图书馆看书</text>
        <text transform="translate(871 853) rotate(-90)">5.1. 别挂科</text>
        <text transform="translate(892.500 853) rotate(-90)">5.2. 别作弊</text>
        <text transform="translate(914.500 853) rotate(-90)">5.3. 有效复习</text>
        <text transform="translate(936 853) rotate(-90)">5.4. 查漏补缺</text>
        <text transform="translate(976.500 853) rotate(-90)">4.1. 拥有自我判断的能力</text>
        <text transform="translate(998.500 853) rotate(-90)">4.2. 及时回复他人信息</text>
        <text transform="translate(1019.500 853) rotate(-90)">4.3. 不要因为要合群而合群</text>
        <text transform="translate(1041 853) rotate(-90)">4.4. 传输文件及时下载</text>
        <text transform="translate(1062.500 853) rotate(-90)">4.5. 拒绝无效社交</text>
        <text transform="translate(1084.500 853) rotate(-90)">4.6. 拒绝官僚主义</text>
        <text transform="translate(1106 853) rotate(-90)">4.7. 参加一次志愿者活动</text>
      </g>
    </svg>
  </div>

  <div class="floatbtn d-flex align-items-center justify-content-center">
    <svg width="18" height="18" viewBox="0 0 18 18" fill="none" stroke="#fff" stroke-width="1.200"><path d="M6 4V2h6v4"/><rect x="7" y="6" width="9" height="10" fill="#fff" fill-opacity=".2"/><path d="M9 9l1 4 1-3 1 3 1-4M2 10v5h4M4 13l2 2-2 2"/></svg>
  </div>
  <div class="scrollup">▲</div>
  <div class="scrolltrack"></div>
  <svg class="mouseptr" width="16" height="24" viewBox="0 0 16 24"><path d="M.5.500V19l4.500-4 3.200 7.500 3-1.300L8 14h6z" fill="#fff" stroke="#000" stroke-width="1"/></svg>
</div>

<div class="statusbar d-flex align-items-center">
  <div class="cell-s"><svg class="ico" width="14" height="12" viewBox="0 0 14 12"><rect x=".5" y=".5" width="13" height="11"/><path d="M4 .5v11"/></svg></div>
  <div class="sdiv g10"></div>
  <div class="cell-s g10"><svg class="ico dim" width="12" height="14" viewBox="0 0 12 14"><path d="M2 1v12M10 1L4 7l6 6"/></svg></div>
  <div class="cell-s g12"><svg class="ico dim" width="8" height="14" viewBox="0 0 8 14"><path d="M7 1L1 7l6 6"/></svg></div>
  <div class="sinput g11">1/2</div>
  <div class="cell-s g11"><svg class="ico" width="8" height="14" viewBox="0 0 8 14"><path d="M1 1l6 6-6 6"/></svg></div>
  <div class="cell-s g12"><svg class="ico" width="12" height="14" viewBox="0 0 12 14"><path d="M2 1l6 6-6 6M10 1v12"/></svg></div>
  <div class="sdiv g11"></div>
  <div class="cell-s g10"><svg class="ico dim" width="14" height="16" viewBox="0 0 14 16"><rect x=".5" y="1" width="13" height="14"/><path d="M10 8H4M6 6L4 8l2 2"/></svg></div>
  <div class="cell-s g12"><svg class="ico dim" width="14" height="16" viewBox="0 0 14 16"><rect x=".5" y="1" width="13" height="14"/><path d="M4 8h6M8 6l2 2-2 2"/></svg></div>

  <div class="cell-s ms-auto"><svg class="ico" width="16" height="12" viewBox="0 0 16 12"><path d="M1 6c3-6.500 11-6.500 14 0-3 6.500-11 6.500-14 0z"/><circle cx="8" cy="6" r="2.500"/></svg></div>
  <div class="chev g2"><svg class="ico" width="7" height="5" viewBox="0 0 8 6"><path d="M1 1l3 3 3-3" stroke-width="1.600"/></svg></div>
  <div class="sdiv g15"></div>
  <div class="cell-s g9"><svg class="ico" width="14" height="16" viewBox="0 0 14 16"><path d="M1.500 1v5h11V1M1 8h12M1.500 15v-5h11v5"/></svg></div>
  <div class="sdiv g10"></div>
  <div class="sbtn g8 d-flex align-items-center justify-content-center"><svg class="ico" width="12" height="14" viewBox="0 0 12 14"><rect x=".5" y=".5" width="11" height="13"/><path d="M3 4.500h6M3 7.500h4"/></svg></div>
  <div class="cell-s g10"><svg class="ico" width="16" height="14" viewBox="0 0 16 14"><rect x="1" y=".5" width="5" height="13"/><rect x="10" y=".5" width="5" height="13"/></svg></div>
  <div class="sdiv g10"></div>
  <div class="redplay g10 d-flex align-items-center justify-content-center"><svg width="8" height="10" viewBox="0 0 8 10"><path d="M1 0l7 5-7 5z" fill="#fff"/></svg></div>
  <div class="sdiv g11"></div>
  <div class="cell-s g9"><svg class="ico" width="14" height="14" viewBox="0 0 14 14"><rect x=".5" y=".5" width="13" height="13"/><path d="M4 4v6M10 4v6M7 5v.5M7 8.500V9"/></svg></div>
  <div class="sbtn g11 d-flex align-items-center justify-content-center"><svg class="ico" width="14" height="14" viewBox="0 0 14 14"><path d="M1 3.500V1h2.500M10.500 1H13v2.500M13 10.500V13h-2.500M3.500 13H1v-2.500"/><rect x="3.500" y="3" width="7" height="8"/></svg></div>
  <div class="cell-s g10"><svg class="ico" width="16" height="14" viewBox="0 0 16 14"><path d="M3 8V1h10v7M1 11h14M3 9l-2 2 2 2M13 9l2 2-2 2"/></svg></div>
  <div class="sdiv g11"></div>
  <div class="pct g16">72%</div>
  <div class="chev g11"><svg class="ico" width="7" height="5" viewBox="0 0 8 6"><path d="M1 1l3 3 3-3" stroke-width="1.600"/></svg></div>
  <div class="cell-s g13"><svg class="ico" width="12" height="3" viewBox="0 0 12 3"><path d="M0 1.500h12" stroke-width="1.800"/></svg></div>
  <div class="slide g11 d-flex align-items-center"><i></i><b></b></div>
  <div class="cell-s g6"><svg class="ico" width="12" height="12" viewBox="0 0 12 12"><path d="M0 6h12M6 0v12" stroke-width="1.800"/></svg></div>
  <div class="cell-s g12"><svg class="ico" width="14" height="14" viewBox="0 0 14 14"><path d="M1 4V1h3M10 1h3v3M13 10v3h-3M4 13H1v-3M3 3c1.500 3 1.500 5 0 8M11 3c-1.500 3-1.500 5 0 8"/></svg></div>
</div>
<div class="taskstrip"></div>

<div class="imelogo">S</div>
<div class="imebar d-flex align-items-center">
  <span class="hz g1">中</span>
  <svg class="g7" width="18" height="14" viewBox="0 0 18 14"><circle cx="6" cy="5" r="1.800" fill="none" stroke="#0b6fd9" stroke-width="1.200"/><path d="M13 7c1 0 1.500 1 1 2l-1.500 3" fill="none" stroke="#0b6fd9" stroke-width="2"/></svg>
  <svg class="g8" width="14" height="16" viewBox="0 0 14 16"><rect class="fillb" x="4" y="0" width="6" height="10" rx="3"/><path d="M1.500 7a5.500 5.500 0 0 0 11 0M7 12.500V15M4 15h6" fill="none" stroke="#0b6fd9" stroke-width="1.300"/></svg>
  <svg class="g10" width="16" height="14" viewBox="0 0 16 14"><rect class="fillb" y="1" width="16" height="12" rx="2"/><path d="M2.500 4h1M5.500 4h1M8.500 4h1M11.500 4h2M2.500 7h1M5.500 7h1M8.500 7h1M11.500 7h2M4 10h8" stroke="#fff" stroke-width="1.200"/></svg>
  <svg class="g8" width="15" height="14" viewBox="0 0 15 14"><path class="fillb" d="M4 0l3.500 1.500L11 0l4 3-2 3-1.500-1v9h-8V5L2 6 0 3z"/></svg>
  <svg class="g8" width="17" height="15" viewBox="0 0 17 15"><path class="fillb" d="M8.500 3a6 6 0 0 1 6 5.500 6 6 0 0 1-12 0 6 6 0 0 1 6-5.500zM8 0h1v3H8z"/><circle cx="6" cy="9" r="1.500" fill="#fff"/><circle cx="11" cy="9" r="1.500" fill="#fff"/></svg>
  <svg class="g9" width="15" height="14" viewBox="0 0 15 14"><rect class="fillb" x="0" y="0" width="6.500" height="6.500" rx="1.500"/><rect class="fillb" x="8.500" y="0" width="6.500" height="6.500" rx="3"/><rect class="fillb" x="0" y="7.500" width="6.500" height="6.500" rx="1.500"/><rect class="fillb" x="8.500" y="7.500" width="6.500" height="6.500" rx="1.500"/></svg>
  <svg class="g8" width="15" height="16" viewBox="0 0 15 16"><path class="fillb" d="M7.500 0l2 2.500 3-.5.500 3 2 2.500-2 2.500-.5 3-3-.5-2 2.500-2-2.500-3 .5-.5-3L0 7.500 2 5l.5-3 3 .5z"/><path d="M5 10l2.500-5 2.500 5M6 8.500h3" fill="none" stroke="#fff" stroke-width="1.200"/></svg>
</div>

<div class="wmk">
  <svg width="48" height="44" viewBox="0 0 48 44"><path d="M46 2C30 2 12 6 5 19c-4 8 2 15 12 15-7-3-9-9-5-15C18 9 32 5 46 2z" fill="#4f9fd8" opacity=".85"/><path d="M10 34c8 6 22 5 28-5 3-6 0-11-6-13 2 5 0 9-5 12-5 3-11 4-17 6z" fill="#9ccc5a" opacity=".85"/><path d="M18 24c4-6 10-9 17-10-4 3-8 6-10 11z" fill="#7bc4a8" opacity=".7"/></svg>
  <div class="wmk-t">极光下载站</div>
  <div class="wmk-u">www.xz7.com</div>
</div>

</body>
</html>
